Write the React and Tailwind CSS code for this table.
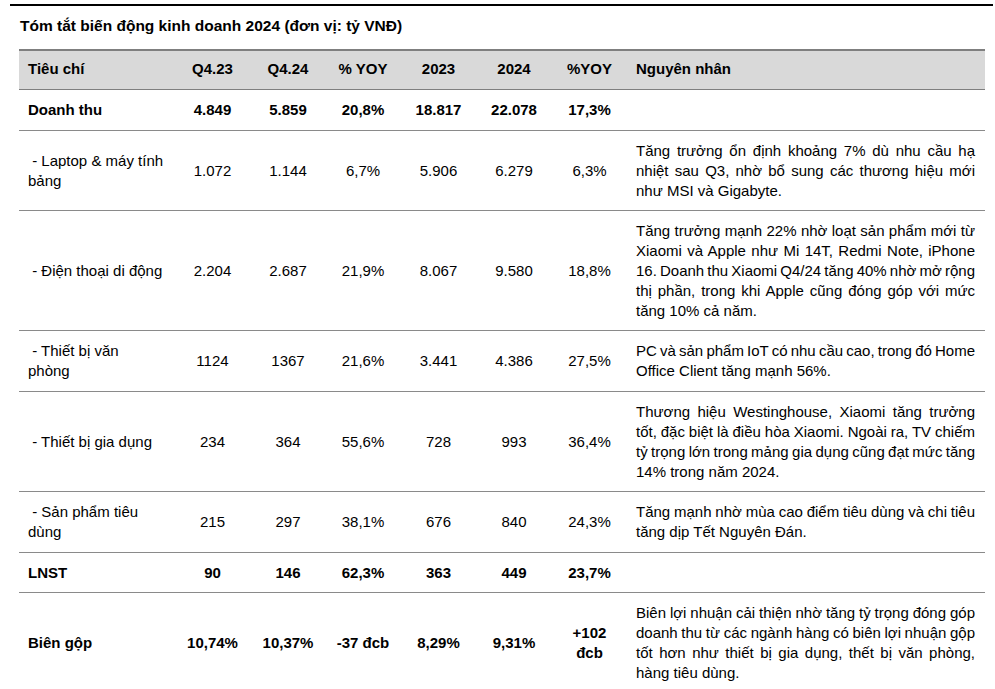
import React from "react";

// note text is split into the same lines as the source document
const rows = [
  {
    name: ["Doanh thu"],
    bold: true,
    tall: true,
    vals: ["4.849", "5.859", "20,8%", "18.817", "22.078", "17,3%"],
    note: [],
  },
  {
    name: ["\u00a0- Laptop & máy tính", "bảng"],
    vals: ["1.072", "1.144", "6,7%", "5.906", "6.279", "6,3%"],
    note: [
      "Tăng trưởng ổn định khoảng 7% dù nhu cầu hạ",
      "nhiệt sau Q3, nhờ bổ sung các thương hiệu mới",
      "như MSI và Gigabyte.",
    ],
  },
  {
    name: ["\u00a0- Điện thoại di động"],
    vals: ["2.204", "2.687", "21,9%", "8.067", "9.580", "18,8%"],
    note: [
      "Tăng trưởng mạnh 22% nhờ loạt sản phẩm mới từ",
      "Xiaomi và Apple như Mi 14T, Redmi Note, iPhone",
      "16. Doanh thu Xiaomi Q4/24 tăng 40% nhờ mở rộng",
      "thị phần, trong khi Apple cũng đóng góp với mức",
      "tăng 10% cả năm.",
    ],
  },
  {
    name: ["\u00a0- Thiết bị văn", "phòng"],
    tall: true,
    vals: ["1124", "1367", "21,6%", "3.441", "4.386", "27,5%"],
    note: ["PC và sản phẩm IoT có nhu cầu cao, trong đó Home", "Office Client tăng mạnh 56%."],
  },
  {
    name: ["\u00a0- Thiết bị gia dụng"],
    vals: ["234", "364", "55,6%", "728", "993", "36,4%"],
    note: [
      "Thương hiệu Westinghouse, Xiaomi tăng trưởng",
      "tốt, đặc biệt là điều hòa Xiaomi. Ngoài ra, TV chiếm",
      "tỷ trọng lớn trong mảng gia dụng cũng đạt mức tăng",
      "14% trong năm 2024.",
    ],
  },
  {
    name: ["\u00a0- Sản phẩm tiêu", "dùng"],
    tall: true,
    vals: ["215", "297", "38,1%", "676", "840", "24,3%"],
    note: ["Tăng mạnh nhờ mùa cao điểm tiêu dùng và chi tiêu", "tăng dịp Tết Nguyên Đán."],
  },
  {
    name: ["LNST"],
    bold: true,
    vals: ["90", "146", "62,3%", "363", "449", "23,7%"],
    note: [],
  },
  {
    name: ["Biên gộp"],
    bold: true,
    vals: ["10,74%", "10,37%", "-37 đcb", "8,29%", "9,31%", ["+102", "đcb"]],
    note: [
      "Biên lợi nhuận cải thiện nhờ tăng tỷ trọng đóng góp",
      "doanh thu từ các ngành hàng có biên lợi nhuận gộp",
      "tốt hơn như thiết bị gia dụng, thết bị văn phòng,",
      "hàng tiêu dùng.",
    ],
  },
];

const headers = ["Q4.23", "Q4.24", "% YOY", "2023", "2024", "%YOY"];

const Lines = ({ items }) =>
  items.map((t, k) => (
    <div key={k} className="whitespace-nowrap">
      {t}
    </div>
  ));

export default function App() {
  return (
    <div
      className="bg-white min-h-screen pt-[4px] pl-[10px] text-black"
      style={{ fontFamily: '"Liberation Sans", Arial, sans-serif' }}
    >
      {/* top rule */}
      <div className="h-[2px] w-[983px] bg-black" />

      {/* title */}
      <div className="ml-[10px] mt-[10px] mb-[13px] text-[15.5px] leading-[20px] font-bold">
        Tóm tắt biến động kinh doanh 2024 (đơn vị: tỷ VNĐ)
      </div>

      {/* table */}
      <table className="ml-[9px] w-[966px] border-collapse table-fixed text-[15px] leading-[20px]">
        <colgroup>
          <col className="w-[155px]" />
          <col className="w-[77px]" />
          <col className="w-[74px]" />
          <col className="w-[76px]" />
          <col className="w-[75px]" />
          <col className="w-[76px]" />
          <col className="w-[75px]" />
          <col className="w-[358px]" />
        </colgroup>
        <thead>
          <tr className="bg-[#d9d9d9] border-t-2 border-b border-[#7f7f7f]">
            <th className="pt-[8px] pb-[10px] pl-[9px] text-left font-bold">Tiêu chí</th>
            {headers.map((h) => (
              <th key={h} className="pt-[8px] pb-[10px] text-center font-bold">
                {h}
              </th>
            ))}
            <th className="pt-[8px] pb-[10px] pl-[9px] text-left font-bold">Nguyên nhân</th>
          </tr>
        </thead>
        <tbody>
          {rows.map((r, i) => {
            const pad = r.tall ? "pt-[10px] pb-[10px]" : "pt-[10px] pb-[9px]";
            return (
              <tr key={i} className="border-b border-[#8a8a8a]">
                <td className={`${pad} pl-[9px] align-middle ${r.bold ? "font-bold" : ""}`}>
                  <Lines items={r.name} />
                </td>
                {r.vals.map((v, j) => (
                  <td
                    key={j}
                    className={`${pad} text-center align-middle ${r.bold ? "font-bold" : ""}`}
                  >
                    {Array.isArray(v) ? <Lines items={v} /> : v}
                  </td>
                ))}
                <td className={`${pad} pl-[9px] pr-[10px] align-middle`}>
                  {r.note.map((t, k) =>
                    k < r.note.length - 1 ? (
                      <div
                        key={k}
                        className="whitespace-nowrap text-justify [text-align-last:justify] [word-spacing:-2px]"
                      >
                        {t}
                      </div>
                    ) : (
                      <div key={k} className="whitespace-nowrap text-left">
                        {t}
                      </div>
                    )
                  )}
                </td>
              </tr>
            );
          })}
        </tbody>
      </table>
    </div>
  );
}
